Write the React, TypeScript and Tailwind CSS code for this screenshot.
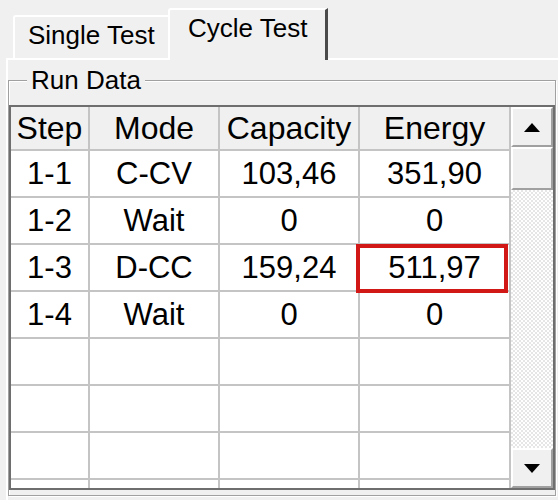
const font = "font-['Liberation_Sans','Arial',sans-serif]"

const rows = [
  { step: '1-1', mode: 'C-CV', capacity: '103,46', energy: '351,90' },
  { step: '1-2', mode: 'Wait', capacity: '0', energy: '0' },
  { step: '1-3', mode: 'D-CC', capacity: '159,24', energy: '511,97' },
  { step: '1-4', mode: 'Wait', capacity: '0', energy: '0' },
  { step: '', mode: '', capacity: '', energy: '' },
  { step: '', mode: '', capacity: '', energy: '' },
  { step: '', mode: '', capacity: '', energy: '' },
  { step: '', mode: '', capacity: '', energy: '' },
]

const cell = 'flex items-center justify-center border-r-2 border-b-2 border-[#c4c4c4]'

function ScrollButton({ up }: { up: boolean }) {
  return (
    <div className="h-[40px] flex items-center justify-center bg-[#f0f0f0] border-2 border-t-white border-l-white border-r-[#a0a0a0] border-b-[#a0a0a0]">
      <svg width="16" height="9" viewBox="0 0 16 9">
        {up ? <polygon points="8,0 16,9 0,9" fill="#000" /> : <polygon points="0,0 16,0 8,9" fill="#000" />}
      </svg>
    </div>
  )
}

export default function App() {
  return (
    <div className={`w-[558px] h-[500px] bg-[#f0f0f0] overflow-hidden text-black ${font}`}>
      {/* tabs */}
      <div className="h-[58px] flex items-end pl-[13px]">
        <div className="w-[157px] h-[43px] border-l-2 border-t-2 border-white rounded-tl-[3px] pl-[13px] pt-[5px] text-[26px] leading-none">
          Single Test
        </div>
        <div className="relative z-10 -ml-[2px] -mb-[2px] w-[160px] h-[52px] bg-[#f0f0f0] border-l-2 border-t-2 border-white border-r-[3px] border-r-[#4a4a4a] rounded-tl-[3px] pl-[18px] pt-[5px] text-[26px] leading-none">
          Cycle Test
        </div>
      </div>

      {/* tab page */}
      <div className="ml-[6px] h-[442px] border-l-2 border-t-2 border-white pt-[20px]">
        <div className="relative w-[548px] h-[416px] border border-[#a0a0a0] shadow-[inset_1px_1px_0_#fff,1px_1px_0_#fff]">
          <span className="absolute -top-[14px] left-[18px] px-[4px] bg-[#f0f0f0] text-[26px] leading-none">Run Data</span>

          <div className="mt-[24px] w-[546px] h-[385px] border-2 border-[#6e6e6e] flex bg-white overflow-hidden">
            <div className="relative grid grid-cols-[79px_130px_140px_151px] auto-rows-min content-start overflow-hidden">
              {['Step', 'Mode', 'Capacity', 'Energy'].map((h) => (
                <div key={h} className={`${cell} h-[44px] bg-[#f0f0f0] text-[32px] leading-none`}>
                  {h}
                </div>
              ))}
              {rows.map((r, i) => (
                <div key={i} className="contents">
                  <div className={`${cell} h-[47px] text-[31px] leading-none`}>{r.step}</div>
                  <div className={`${cell} h-[47px] text-[31px] leading-none`}>{r.mode}</div>
                  <div className={`${cell} h-[47px] text-[31px] leading-none`}>{r.capacity}</div>
                  <div className={`${cell} h-[47px] text-[31px] leading-none`}>{r.energy}</div>
                </div>
              ))}
              {/* highlight */}
              <div className="absolute left-[345px] top-[137px] w-[152px] h-[49px] border-4 border-[#d21717]" />
            </div>

            {/* scrollbar */}
            <div className="w-[42px] flex flex-col bg-[#f0f0f0]">
              <ScrollButton up />
              <div className="h-[43px] bg-[#f0f0f0] border-2 border-t-white border-l-white border-r-[#a0a0a0] border-b-[#a0a0a0]" />
              <div className="flex-1 bg-[repeating-conic-gradient(#e6e6e6_0%_25%,#ffffff_0%_50%)] bg-[length:4px_4px]" />
              <ScrollButton up={false} />
            </div>
          </div>
        </div>
      </div>
    </div>
  )
}
